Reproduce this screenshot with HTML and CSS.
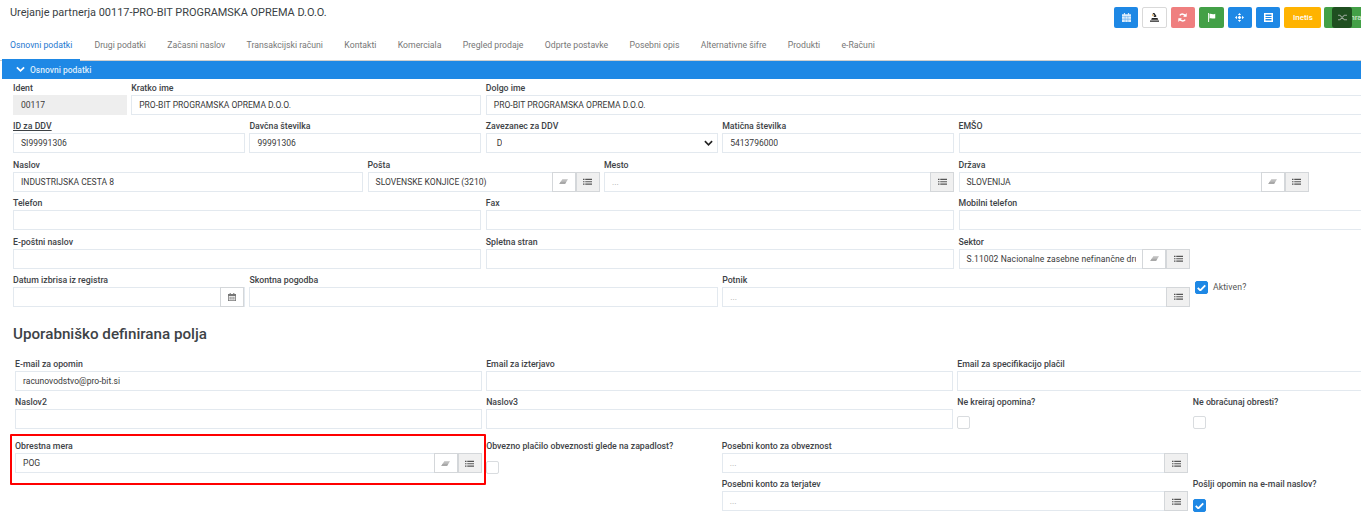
FILE: index.html
```html
<!DOCTYPE html>
<html lang="sl">
<head>
<meta charset="utf-8">
<title>Urejanje partnerja</title>
<link rel="stylesheet" href="styles.css">
</head>
<body>
<svg class="defs" width="0" height="0" aria-hidden="true">
  <defs>
    <symbol id="i-list" viewBox="0 0 12 10"><path d="M0 1h2v1.6H0zM3 1h9v1.6H3zM0 4.2h2v1.6H0zM3 4.2h9v1.6H3zM0 7.4h2V9H0zM3 7.4h9V9H3z"/></symbol>
    <symbol id="i-eraser" viewBox="0 0 12 10"><path d="M4.4 1.5H12L8 8H.4z" opacity=".75"/><path d="M2.2 5h7.6L8 8H.4z"/></symbol>
    <symbol id="i-cal" viewBox="0 0 12 12"><path d="M2.5 0h1.6v1.5h3.8V0h1.6v1.5H12V12H0V1.5h2.5zM1.2 4.6v6.2h9.6V4.6z"/><path d="M2.2 5.6h2v1.7h-2zM5 5.6h2v1.7H5zM7.8 5.6h2v1.7h-2zM2.2 8h2v1.7h-2zM5 8h2v1.7H5zM7.8 8h2v1.7h-2z"/></symbol>
    <symbol id="i-check" viewBox="0 0 12 10"><path d="M1 5.2 4.4 8.6 11 1.8" fill="none" stroke="currentColor" stroke-width="2.4"/></symbol>
  </defs>
</svg>

<div class="page">
  <header class="top">
    <h1 class="title">Urejanje partnerja 00117-PRO-BIT PROGRAMSKA OPREMA D.O.O.</h1>
    <div class="actions">
      <button class="btn blue"><svg class="ico" viewBox="0 0 12 12"><path fill="currentColor" d="M2.5 0h1.6v1.5h3.8V0h1.6v1.5H12V12H0V1.5h2.5z" opacity=".85"/><path fill="#1e88e5" d="M0 4h12v.8H0zM3.7 4h.8v8h-.8zM7.5 4h.8v8h-.8zM0 7.7h12v.8H0z" opacity=".6"/></svg></button>
      <button class="btn white"><svg class="ico" viewBox="0 0 12 12"><path fill="#222" d="M3.4 0h2.4l3 4.2-1.6 1.2H4.600L6 3.800zM2.500 6.600h7.500l1 2.400H1.500zM0 10h12v1.600H0z"/><path fill="#c9871f" d="M3.200 1 5 3.600 3.800 4.400 3 3z"/></svg></button>
      <button class="btn red"><svg class="ico" viewBox="0 0 12 12"><path fill="none" stroke="currentColor" stroke-width="2" d="M10 4.400A4.400 4.400 0 0 0 2.400 3.200M2 7.600a4.400 4.400 0 0 0 7.600 1.200"/><path fill="currentColor" d="M11.600 0v5H6.800zM.4 12V7h4.800z"/></svg></button>
      <button class="btn green"><svg class="ico" viewBox="0 0 12 12"><path fill="currentColor" d="M1.500 0h1.300v12H1.500zM3.400 1.300c2-1 3.600 1 6 .2L11 1v6c-2.600 1.200-5-.7-7.600.2z"/></svg></button>
      <button class="btn blue"><svg class="ico" viewBox="0 0 12 12"><path fill="currentColor" d="M6 0 8.200 2.600H3.800zM6 12 3.800 9.400h4.400zM0 6l2.600-2.200v4.400zM12 6 9.400 3.800v4.400zM6 3.400 8.600 6 6 8.600 3.400 6z"/></svg></button>
      <button class="btn blue"><svg class="ico" viewBox="0 0 12 12"><path fill="currentColor" d="M0 0h12v12H0zM2 2v2h8V2zM2 5.200v1.600h8V5.200zM2 8v2h8V8z"/></svg></button>
      <button class="btn amber wide">Inetis</button>
      <button class="btn green save"><svg class="ico" viewBox="0 0 12 10"><use href="#i-check"/></svg><span>Shrani</span></button>
    </div>
    <div class="float-btn"><svg class="ico" viewBox="0 0 12 12"><path fill="none" stroke="currentColor" stroke-width="1.400" d="M0 3h2.500l6 6H12M0 9h2.500l6-6H12"/></svg></div>
  </header>

  <nav class="tabs">
    <a class="tab active">Osnovni podatki</a>
    <a class="tab">Drugi podatki</a>
    <a class="tab">Začasni naslov</a>
    <a class="tab">Transakcijski računi</a>
    <a class="tab">Kontakti</a>
    <a class="tab">Komerciala</a>
    <a class="tab">Pregled prodaje</a>
    <a class="tab">Odprte postavke</a>
    <a class="tab">Posebni opis</a>
    <a class="tab">Alternativne šifre</a>
    <a class="tab">Produkti</a>
    <a class="tab">e-Računi</a>
  </nav>

  <div class="panel-head">
    <svg class="chev" viewBox="0 0 10 7"><path d="M1 1.200 5 5l4-3.800" fill="none" stroke="currentColor" stroke-width="2"/></svg>
    <span>Osnovni podatki</span>
  </div>

  <section class="grid main">
    <div class="field s1"><label>Ident</label><div class="box readonly"><span>00117</span></div></div>
    <div class="field s3"><label>Kratko ime</label><div class="box"><span>PRO-BIT PROGRAMSKA OPREMA D.O.O.</span></div></div>
    <div class="field s8"><label>Dolgo ime</label><div class="box"><span>PRO-BIT PROGRAMSKA OPREMA D.O.O.</span></div></div>

    <div class="field s2"><label class="under">ID za DDV</label><div class="box"><span>SI99991306</span></div></div>
    <div class="field s2"><label>Davčna številka</label><div class="box"><span>99991306</span></div></div>
    <div class="field s2"><label>Zavezanec za DDV</label><div class="box select"><span>D</span><svg class="caret" viewBox="0 0 10 7"><path d="M1 1.200 5 5.200l4-4" fill="none" stroke="currentColor" stroke-width="1.800"/></svg></div></div>
    <div class="field s2"><label>Matična številka</label><div class="box"><span>5413796000</span></div></div>
    <div class="field s4"><label>EMŠO</label><div class="box"></div></div>

    <div class="field s3"><label>Naslov</label><div class="box"><span>INDUSTRIJSKA CESTA 8</span></div></div>
    <div class="field s2"><label>Pošta</label><div class="box"><span class="val">SLOVENSKE KONJICE (3210)</span><i class="add erase"><svg><use href="#i-eraser"/></svg></i><i class="add list"><svg><use href="#i-list"/></svg></i></div></div>
    <div class="field s3"><label>Mesto</label><div class="box"><span class="val ph">...</span><i class="add list"><svg><use href="#i-list"/></svg></i></div></div>
    <div class="field s3"><label>Država</label><div class="box"><span class="val">SLOVENIJA</span><i class="add erase"><svg><use href="#i-eraser"/></svg></i><i class="add list"><svg><use href="#i-list"/></svg></i></div></div>
    <div class="field s1 blank"></div>

    <div class="field s4"><label>Telefon</label><div class="box"></div></div>
    <div class="field s4"><label>Fax</label><div class="box"></div></div>
    <div class="field s4"><label>Mobilni telefon</label><div class="box"></div></div>

    <div class="field s4"><label>E-poštni naslov</label><div class="box"></div></div>
    <div class="field s4"><label>Spletna stran</label><div class="box"></div></div>
    <div class="field s2"><label>Sektor</label><div class="box"><span class="val spaced">S.11002 Nacionalne zasebne nefinančne dru</span><i class="add erase"><svg><use href="#i-eraser"/></svg></i><i class="add list"><svg><use href="#i-list"/></svg></i></div></div>
    <div class="field s2 blank"></div>

    <div class="field s2"><label>Datum izbrisa iz registra</label><div class="box"><span class="val"></span><i class="add erase"><svg class="cal"><use href="#i-cal"/></svg></i></div></div>
    <div class="field s4"><label>Skontna pogodba</label><div class="box"></div></div>
    <div class="field s4"><label>Potnik</label><div class="box"><span class="val ph">...</span><i class="add list"><svg><use href="#i-list"/></svg></i></div></div>
    <div class="inline-check s2"><i class="check on"><svg><use href="#i-check"/></svg></i><span>Aktiven?</span></div>
  </section>

  <h2 class="section-title">Uporabniško definirana polja</h2>

  <section class="grid user">
    <div class="field s4"><label>E-mail za opomin</label><div class="box"><span>racunovodstvo@pro-bit.si</span></div></div>
    <div class="field s4"><label>Email za izterjavo</label><div class="box"></div></div>
    <div class="field s4"><label>Email za specifikacijo plačil</label><div class="box"></div></div>

    <div class="field s4"><label>Naslov2</label><div class="box"></div></div>
    <div class="field s4"><label>Naslov3</label><div class="box"></div></div>
    <div class="field s2"><label>Ne kreiraj opomina?</label><i class="check"></i></div>
    <div class="field s2"><label>Ne obračunaj obresti?</label><i class="check"></i></div>
  </section>

  <section class="grid user lower">
    <div class="field s4 marked"><label>Obrestna mera</label><div class="box"><span class="val">POG</span><i class="add erase"><svg><use href="#i-eraser"/></svg></i><i class="add list"><svg><use href="#i-list"/></svg></i></div></div>
    <div class="field s2"><label>Obvezno plačilo obveznosti glede na zapadlost?</label><i class="check"></i></div>
    <div class="field s4"><label>Posebni konto za obveznost</label><div class="box"><span class="val ph">...</span><i class="add list"><svg><use href="#i-list"/></svg></i></div></div>
    <div class="field s2 blank"></div>

    <div class="field s4 from7"><label>Posebni konto za terjatev</label><div class="box"><span class="val ph">...</span><i class="add list"><svg><use href="#i-list"/></svg></i></div></div>
    <div class="field s2"><label>Pošlji opomin na e-mail naslov?</label><i class="check on"><svg><use href="#i-check"/></svg></i></div>
  </section>
</div>
</body>
</html>
```

FILE: styles.css
```css
* { box-sizing: border-box; }
html, body { margin: 0; height: 100%; overflow: hidden; background: #fff; }
body { font-family: Roboto, "Liberation Sans", sans-serif; color: #333; font-size: 8.5px; }
.defs { position: absolute; }
.page { width: 1361px; height: 527px; overflow: hidden; position: relative; }

.top { display: flex; align-items: flex-start; height: 36px; padding: 7px 0 0 10px; position: relative; }
.title { margin: 0; font-size: 10.95px; line-height: 12px; font-weight: 400; color: #3a3f44; flex: 1; white-space: nowrap; }
.actions { display: flex; gap: 4px; flex: none; width: 247px; }
.btn { flex: none; width: 24.4px; height: 21px; border: 1px solid transparent; border-radius: 2px; padding: 0; color: #fff; font: 500 8px Roboto, sans-serif; display: flex; align-items: center; justify-content: center; gap: 3px; }
.ico { width: 9px; height: 9px; }
.blue { background: #1e88e5; }
.white { background: #fff; border-color: #d9d9d9; }
.red { background: #ef7f7f; }
.green { background: #43a047; }
.amber { background: #ffb300; }
.wide { width: 37px; margin-right: -1px; }
.save { width: 50px; justify-content: flex-start; padding-left: 8px; color: #c9e6ca; }
.float-btn { position: absolute; left: 1332px; top: 7px; width: 20px; height: 21px; background: #1f4f20; border-radius: 3px; color: #9aa79a; display: flex; align-items: center; justify-content: center; }

.tabs { display: flex; height: 24.5px; padding-left: 2px; border-bottom: 1px solid #cfcfcf; align-items: flex-start; }
.tab { padding: 3px 8px 0; margin-right: 5.4px; height: 24.5px; font-size: 8.7px; line-height: 12px; color: #777; white-space: nowrap; }
.tab.active { color: #1e78d0; border-bottom: 2px solid #1e88e5; margin-right: 6.2px; }

.panel-head { height: 18px; background: #1e88e5; color: #dcecfb; display: flex; align-items: center; gap: 5px; padding-left: 14px; margin-left: 2px; font-size: 8.5px; font-weight: 500; }
.chev { width: 9px; height: 7px; color: #fff; }

.grid { display: grid; grid-template-columns: repeat(12, 113.8px); column-gap: 4.4px; row-gap: 4.4px; padding-left: 13px; }
.main { padding-top: 2.5px; }
.user { grid-template-columns: repeat(12, 113.4px); padding-left: 15px; row-gap: 4px; }
.lower { margin-top: 10px; row-gap: 3.5px; }
.s1 { grid-column: span 1; } .s2 { grid-column: span 2; } .s3 { grid-column: span 3; } .s4 { grid-column: span 4; } .s8 { grid-column: span 8; }
.from7 { grid-column: 7 / span 4; }

.field { min-width: 0; position: relative; }
label { display: block; height: 14px; line-height: 15px; font-size: 8.75px; font-weight: 500; color: #3d4246; white-space: nowrap; }
.under { text-decoration: underline; }
.box { display: flex; height: 20px; border: 1px solid #e3e9ef; background: #fff; align-items: center; font-size: 8.55px; color: #3a3a3a; min-width: 0; }
.box > span { padding: 0 0 0 7px; white-space: nowrap; overflow: hidden; }
.box .val { flex: 1; min-width: 0; margin-right: 6px; }
.spaced { letter-spacing: .09px; }
.ph { color: #a9a9a9; }
.readonly { background: #eee; border-color: #eee; }
.select { justify-content: space-between; padding-right: 4px; }
.select > span { padding-left: 10px; }
.caret { width: 9px; height: 6.5px; color: #222; }
.add { flex: none; width: 24px; height: 20px; margin: -1px 0; display: flex; align-items: center; justify-content: center; border: 1px solid #d4d7da; color: #a8a8a8; background: #fff; font-style: normal; }
.add svg { width: 9px; height: 7.5px; fill: currentColor; }
.add svg.cal { width: 8px; height: 8px; fill: #777; }
.add.list { background: #f0f0f0; color: #555; margin-right: -1px; }

.check { display: block; width: 13px; height: 13px; border: 1px solid #d9dcdf; border-radius: 2px; background: #fff; margin-top: 7.5px; }
.check.on { background: #1e88e5; border-color: #1e88e5; color: #fff; display: flex; align-items: center; justify-content: center; }
.check svg { width: 9px; height: 7.5px; }
.inline-check { display: flex; align-items: flex-start; gap: 5px; padding-top: 8px; font-size: 8.7px; color: #555; }
.inline-check .check { margin: 0; flex: none; }
.inline-check span { line-height: 12px; letter-spacing: .1px; }

.section-title { margin: 18px 0 14px 13px; font-size: 15.2px; line-height: 18px; font-weight: 500; color: #3d4246; }

.marked::after { content: ""; position: absolute; left: -5px; right: -4.5px; top: -5px; bottom: -11px; border: 2.5px solid #f00; border-radius: 1px; pointer-events: none; }
```
